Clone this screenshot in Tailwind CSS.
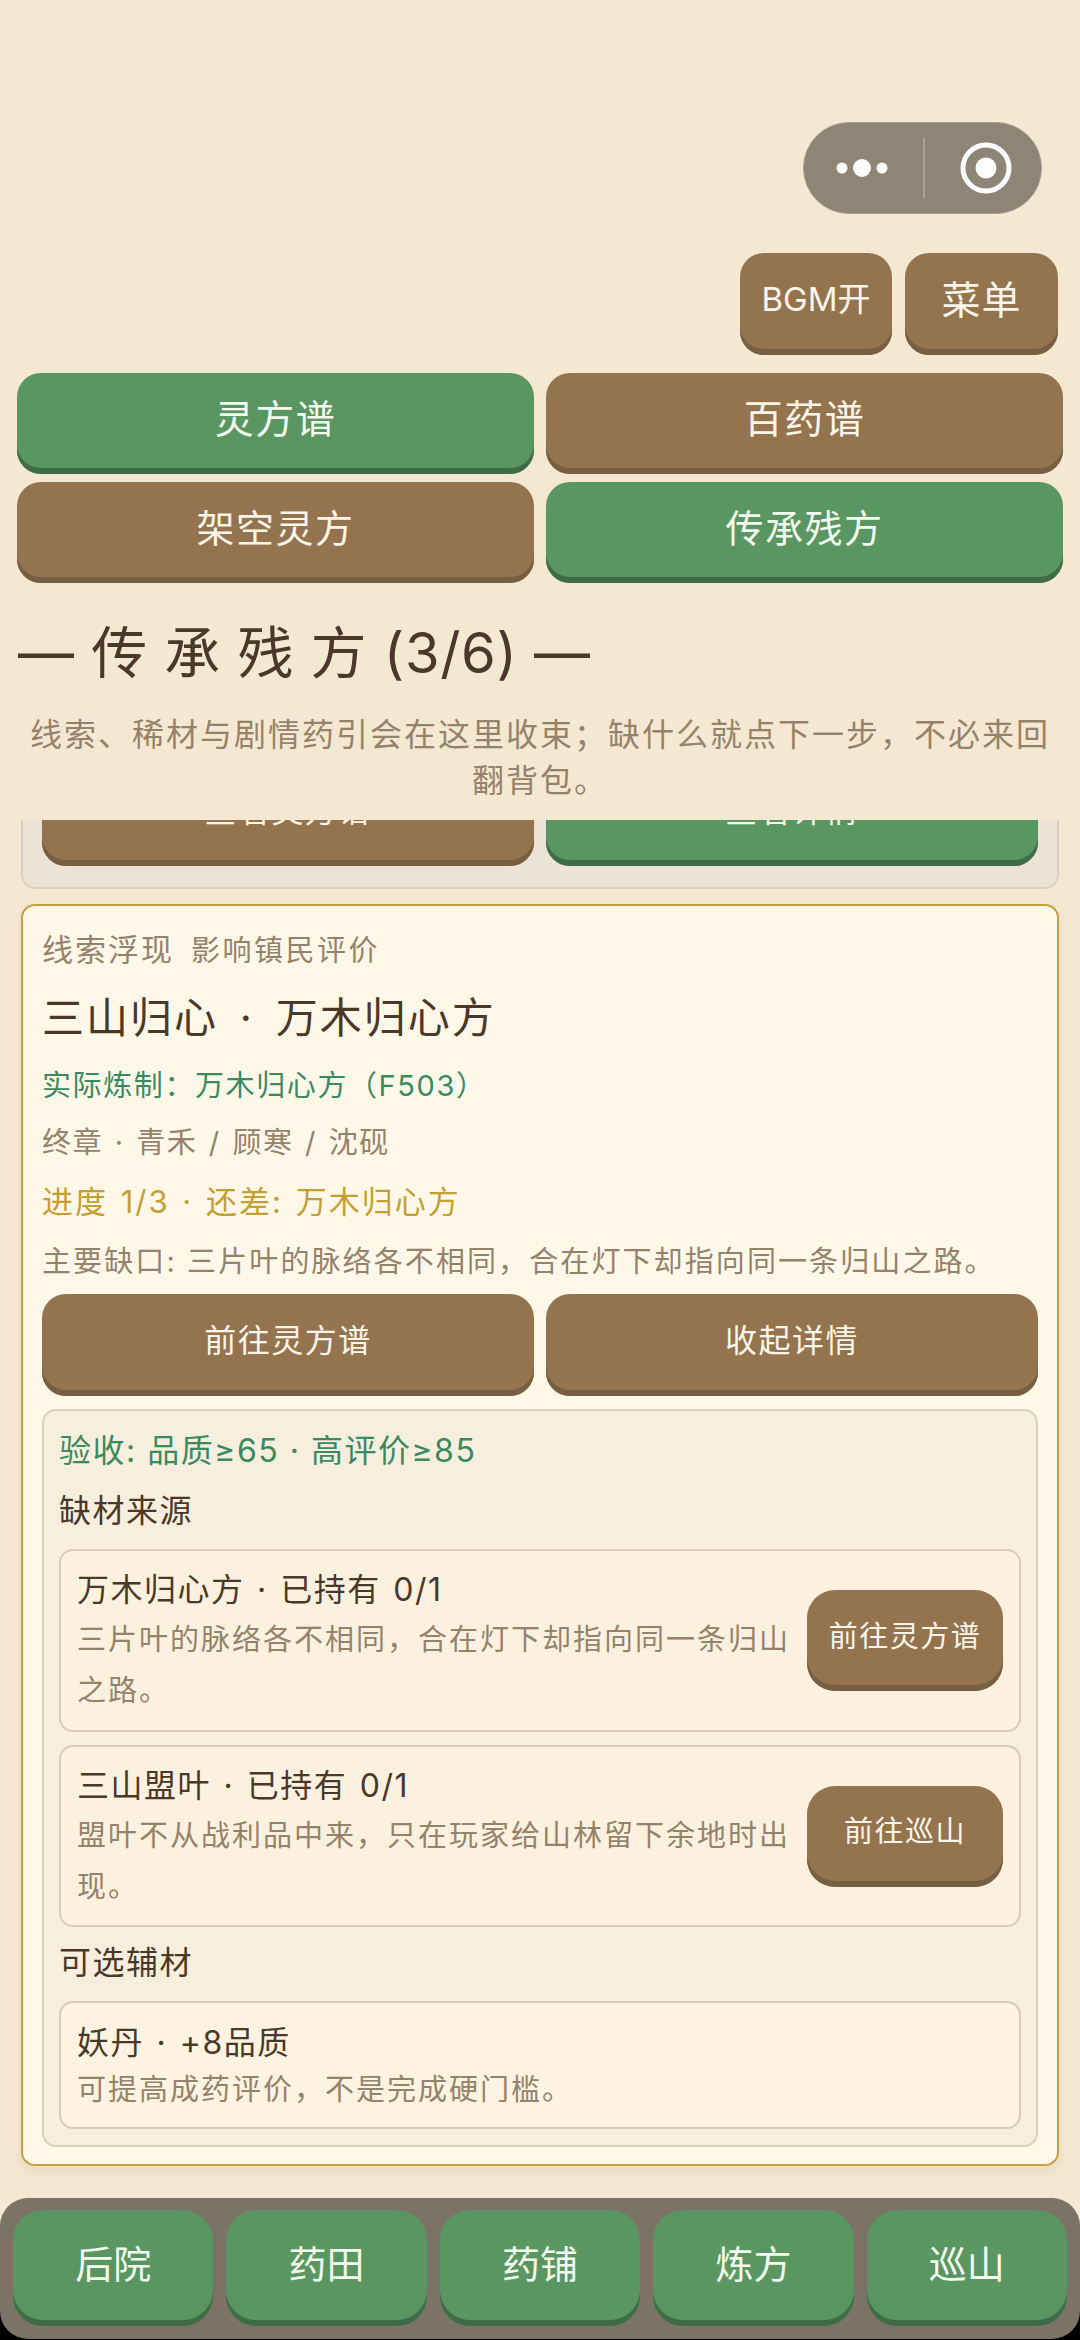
<!DOCTYPE html>
<html lang="zh-CN">
<head>
    <meta charset="UTF-8">
    <meta name="viewport" content="width=device-width, initial-scale=1.0">
    <title>传承残方</title>
    <script src="https://cdn.jsdelivr.net/npm/@tailwindcss/browser@4"></script>
</head>
<body class="bg-[#f5e8d3] font-[Inter,'Noto_Sans_CJK_SC',sans-serif] text-[#4a3828]">
    <div class="w-[1080px] h-[2340px] flex flex-col overflow-hidden">
        <!-- fixed header -->
        <header class="shrink-0 h-[820px] pt-[122px]">
            <div class="flex justify-end pr-[38px]">
                <div class="w-[239px] h-[92px] rounded-full bg-[#8f8577] border border-[#a89f92] flex items-center">
                    <svg class="ml-[22px] w-[76px] h-[30px]" viewBox="0 0 76 30"><circle cx="16" cy="15" r="5.5" fill="#fff"/><circle cx="36" cy="15" r="9" fill="#fff"/><circle cx="56" cy="15" r="5.5" fill="#fff"/></svg>
                    <div class="ml-[21px] w-[2px] h-[60px] bg-[#aaa196]"></div>
                    <svg class="ml-[35px] w-[52px] h-[52px]" viewBox="0 0 52 52"><circle cx="26" cy="26" r="23" fill="none" stroke="#fff" stroke-width="5"/><circle cx="26" cy="26" r="10.5" fill="#fff"/></svg>
                </div>
            </div>
            <div class="mt-[39px] flex justify-end gap-[13px] pr-[22px]">
                <button class="w-[152px] h-[102px] pb-[8px] rounded-[24px] bg-[#93744f] shadow-[inset_0_-6px_0_#765f43] text-[#fbf4e8] text-[33px] flex items-center justify-center">BGM开</button>
                <button class="w-[153px] h-[102px] pb-[8px] rounded-[24px] bg-[#93744f] shadow-[inset_0_-6px_0_#765f43] text-[#fbf4e8] text-[39px] tracking-[1px] flex items-center justify-center">菜单</button>
            </div>
            <div class="mt-[18px] ml-[17px] w-[1046px] grid grid-cols-2 gap-x-[12px] gap-y-[8px]">
                <button class="h-[101px] pb-[8px] rounded-[24px] bg-[#5a9661] shadow-[inset_0_-6px_0_#3f6b45] text-[#f3fbef] text-[39px] tracking-[1.5px] flex items-center justify-center">灵方谱</button>
                <button class="h-[101px] pb-[8px] rounded-[24px] bg-[#93744f] shadow-[inset_0_-6px_0_#765f43] text-[#fbf4e8] text-[39px] tracking-[1.5px] flex items-center justify-center">百药谱</button>
                <button class="h-[101px] pb-[8px] rounded-[24px] bg-[#93744f] shadow-[inset_0_-6px_0_#765f43] text-[#fbf4e8] text-[38px] tracking-[1.5px] flex items-center justify-center">架空灵方</button>
                <button class="h-[101px] pb-[8px] rounded-[24px] bg-[#5a9661] shadow-[inset_0_-6px_0_#3f6b45] text-[#f3fbef] text-[38px] tracking-[1.5px] flex items-center justify-center">传承残方</button>
            </div>
            <h1 class="mt-[35px] pl-[18px] h-[70px] leading-[70px] text-[56px] tracking-[0.7px] whitespace-nowrap">— 传 承 残 方 (3/6) —</h1>
            <p class="mt-[24px] px-[16px] text-center text-[32px] leading-[46px] tracking-[2px] text-[#95826b]">线索、稀材与剧情药引会在这里收束；缺什么就点下一步，不必来回翻背包。</p>
        </header>

        <!-- scrolled list -->
        <main class="flex-1 min-h-0 overflow-hidden px-[21px]">
            <div class="-mt-[81px] pt-[23px] pb-[21px] px-[19px] rounded-[14px] bg-[#ede2d6] border-2 border-[#dccfbf] grid grid-cols-2 gap-x-[12px]">
                <button class="h-[102px] pb-[8px] rounded-[24px] bg-[#93744f] shadow-[inset_0_-6px_0_#765f43] text-[#fbf4e8] text-[32px] tracking-[1.5px] flex items-center justify-center">查看灵方谱</button>
                <button class="h-[102px] pb-[8px] rounded-[24px] bg-[#5a9661] shadow-[inset_0_-6px_0_#3f6b45] text-[#f3fbef] text-[32px] tracking-[1.5px] flex items-center justify-center">查看详情</button>
            </div>

            <section class="mt-[15px] pt-[20px] pb-[17px] px-[19px] rounded-[14px] bg-[#fff8e9] border-2 border-[#c4a244] shadow-[0_6px_14px_rgba(150,110,50,0.12)]">
                <div class="h-[48px] leading-[48px] whitespace-nowrap text-[#95826b]"><span class="text-[31px] tracking-[2px]">线索浮现</span><span class="ml-[17px] text-[29px] tracking-[2.5px]">影响镇民评价</span></div>
                <h2 class="mt-[14px] h-[60px] leading-[60px] text-[42px] tracking-[2px] [word-spacing:8px] whitespace-nowrap">三山归心 · 万木归心方</h2>
                <p class="mt-[16px] h-[44px] leading-[44px] text-[29px] tracking-[1.6px] text-[#3a8a5f] whitespace-nowrap">实际炼制：万木归心方（F503）</p>
                <p class="mt-[13px] h-[44px] leading-[44px] text-[29px] tracking-[1.5px] [word-spacing:2px] text-[#95826b] whitespace-nowrap">终章 · 青禾 / 顾寒 / 沈砚</p>
                <p class="mt-[15px] h-[44px] leading-[44px] text-[31px] tracking-[2px] [word-spacing:2px] text-[#c4a034] whitespace-nowrap">进度 1/3 · 还差: 万木归心方</p>
                <p class="mt-[16px] h-[44px] leading-[44px] text-[29px] tracking-[2.1px] text-[#95826b] whitespace-nowrap">主要缺口: 三片叶的脉络各不相同，合在灯下却指向同一条归山之路。</p>
                <div class="mt-[10px] grid grid-cols-2 gap-x-[12px]">
                    <button class="h-[102px] pb-[8px] rounded-[24px] bg-[#93744f] shadow-[inset_0_-6px_0_#765f43] text-[#fbf4e8] text-[32px] tracking-[1.5px] flex items-center justify-center">前往灵方谱</button>
                    <button class="h-[102px] pb-[8px] rounded-[24px] bg-[#93744f] shadow-[inset_0_-6px_0_#765f43] text-[#fbf4e8] text-[32px] tracking-[1.5px] flex items-center justify-center">收起详情</button>
                </div>

                <div class="mt-[13px] pt-[18px] pb-[16px] px-[15px] rounded-[14px] bg-[#f8eedd] border-2 border-[#ddd0ba]">
                    <p class="h-[44px] leading-[44px] text-[32px] tracking-[1.5px] text-[#3a8a5f] whitespace-nowrap">验收: 品质≥65 · 高评价≥85</p>
                    <h3 class="mt-[16px] h-[44px] leading-[44px] text-[32px] tracking-[1.5px]">缺材来源</h3>

                    <div class="mt-[16px] h-[183px] pl-[16px] pr-[16px] rounded-[14px] bg-[#fcf1de] border-2 border-[#d9ccb6] flex items-center gap-[16px]">
                        <div class="flex-1 min-w-0 pt-[3px]">
                            <p class="h-[44px] leading-[44px] text-[32px] tracking-[1.5px] [word-spacing:2px] whitespace-nowrap">万木归心方 · 已持有 0/1</p>
                            <p class="mt-[2px] text-[29px] leading-[51px] tracking-[2px] text-[#95826b]">三片叶的脉络各不相同，合在灯下却指向同一条归山之路。</p>
                        </div>
                        <button class="shrink-0 w-[196px] h-[101px] pb-[8px] rounded-[28px] bg-[#93744f] shadow-[inset_0_-6px_0_#765f43] text-[#fbf4e8] text-[29px] tracking-[1.5px] flex items-center justify-center">前往灵方谱</button>
                    </div>

                    <div class="mt-[13px] h-[182px] pl-[16px] pr-[16px] rounded-[14px] bg-[#fcf1de] border-2 border-[#d9ccb6] flex items-center gap-[16px]">
                        <div class="flex-1 min-w-0 pt-[3px]">
                            <p class="h-[44px] leading-[44px] text-[32px] tracking-[1.5px] [word-spacing:2px] whitespace-nowrap">三山盟叶 · 已持有 0/1</p>
                            <p class="mt-[2px] text-[29px] leading-[51px] tracking-[2px] text-[#95826b]">盟叶不从战利品中来，只在玩家给山林留下余地时出现。</p>
                        </div>
                        <button class="shrink-0 w-[196px] h-[101px] pb-[8px] rounded-[28px] bg-[#93744f] shadow-[inset_0_-6px_0_#765f43] text-[#fbf4e8] text-[29px] tracking-[1.5px] flex items-center justify-center">前往巡山</button>
                    </div>

                    <h3 class="mt-[14px] h-[44px] leading-[44px] text-[32px] tracking-[1.5px]">可选辅材</h3>

                    <div class="mt-[16px] h-[128px] pt-[18px] pl-[16px] rounded-[14px] bg-[#fdf3e0] border-2 border-[#d9ccb6]">
                        <p class="h-[44px] leading-[44px] text-[32px] tracking-[1.5px] [word-spacing:2px] whitespace-nowrap">妖丹 · +8品质</p>
                        <p class="mt-[3px] h-[44px] leading-[44px] text-[29px] tracking-[2px] text-[#95826b] whitespace-nowrap">可提高成药评价，不是完成硬门槛。</p>
                    </div>
                </div>
            </section>
        </main>

        <!-- bottom tabs, black shows through the display corners -->
        <div class="shrink-0 bg-[linear-gradient(#f5e8d3_50%,#000_50%)]">
            <nav class="h-[141px] mb-px pt-[12px] px-[13px] rounded-[28px] bg-[#7c7265] flex gap-[13px]">
                <button class="flex-1 h-[116px] pb-[8px] rounded-[30px] bg-[#5a9661] shadow-[inset_0_-6px_0_#3f6b45] text-[#f3fbef] text-[38px] flex items-center justify-center">后院</button>
                <button class="flex-1 h-[116px] pb-[8px] rounded-[30px] bg-[#5a9661] shadow-[inset_0_-6px_0_#3f6b45] text-[#f3fbef] text-[38px] flex items-center justify-center">药田</button>
                <button class="flex-1 h-[116px] pb-[8px] rounded-[30px] bg-[#5a9661] shadow-[inset_0_-6px_0_#3f6b45] text-[#f3fbef] text-[38px] flex items-center justify-center">药铺</button>
                <button class="flex-1 h-[116px] pb-[8px] rounded-[30px] bg-[#5a9661] shadow-[inset_0_-6px_0_#3f6b45] text-[#f3fbef] text-[38px] flex items-center justify-center">炼方</button>
                <button class="flex-1 h-[116px] pb-[8px] rounded-[30px] bg-[#5a9661] shadow-[inset_0_-6px_0_#3f6b45] text-[#f3fbef] text-[38px] flex items-center justify-center">巡山</button>
            </nav>
        </div>
    </div>
</body>
</html>
